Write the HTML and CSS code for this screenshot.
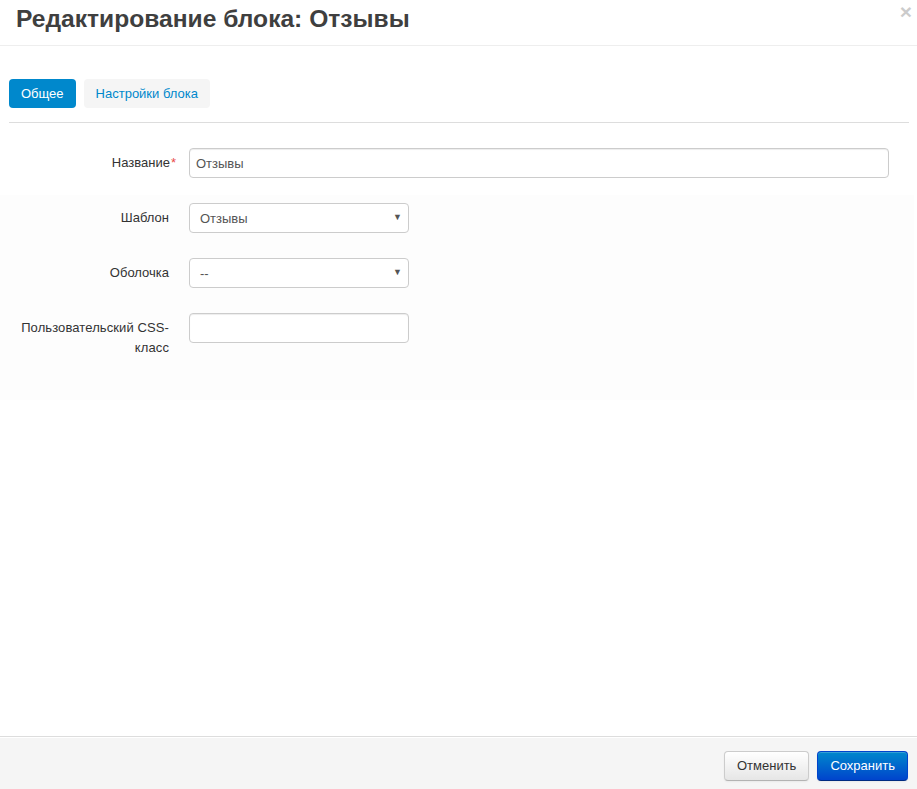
FILE: index.html
```html
<!DOCTYPE html>
<html lang="ru">
<head>
<meta charset="utf-8">
<title>Редактирование блока: Отзывы</title>
<link rel="stylesheet" href="styles.css">
</head>
<body>
<div class="modal">
  <div class="modal-header">
    <h3 class="modal-title">Редактирование блока: Отзывы</h3>
    <span class="close">×</span>
  </div>
  <div class="modal-body">
    <div class="tabs">
      <a class="tab tab-active">Общее</a>
      <a class="tab">Настройки блока</a>
    </div>
    <form class="form">
      <div class="row row-first">
        <label class="label">Название<span class="req">*</span></label>
        <div class="control"><input class="input input-wide" type="text" value="Отзывы"></div>
      </div>
      <div class="fieldset">
        <div class="row">
          <label class="label">Шаблон</label>
          <div class="control"><div class="select"><span>Отзывы</span><i class="caret">▼</i></div></div>
        </div>
        <div class="row">
          <label class="label">Оболочка</label>
          <div class="control"><div class="select"><span>--</span><i class="caret">▼</i></div></div>
        </div>
        <div class="row row-last">
          <label class="label label-wrap">Пользовательский CSS-<br>класс</label>
          <div class="control"><input class="input input-small" type="text" value=""></div>
        </div>
      </div>
    </form>
  </div>
  <div class="modal-footer">
    <button class="btn" type="button">Отменить</button>
    <button class="btn btn-primary" type="button">Сохранить</button>
  </div>
</div>
</body>
</html>
```

FILE: styles.css
```css
* { box-sizing: border-box; }
html, body { margin: 0; padding: 0; background: #fff; }
body {
  font-family: "Liberation Sans", Arial, sans-serif;
  font-size: 13px;
  line-height: 20px;
  color: #333;
}
.modal {
  height: 789px;
  display: flex;
  flex-direction: column;
  position: relative;
}
.modal-header {
  height: 46px;
  padding: 4px 16px 0;
  border-bottom: 1px solid #eee;
}
.modal-title {
  margin: 0;
  font-size: 24.6px;
  line-height: 30px;
  font-weight: bold;
  color: #3f3f3f;
}
.close {
  position: absolute;
  top: 0;
  right: 5px;
  font-size: 21px;
  line-height: 24px;
  font-weight: bold;
  color: #000;
  opacity: 0.2;
}
.modal-body {
  flex: 1;
  padding-top: 33px;
}
.tabs {
  display: flex;
  gap: 8px;
  margin: 0 8px 0 9px;
  padding-bottom: 14px;
  border-bottom: 1px solid #ddd;
}
.tab {
  display: block;
  height: 29px;
  line-height: 29px;
  padding: 0 12px;
  border-radius: 4px;
  background: #f5f5f5;
  color: #0088cc;
}
.tab-active {
  background: #0088cc;
  color: #fff;
}
.form {
  padding-top: 25px;
}
.row {
  display: flex;
  align-items: flex-start;
  margin-bottom: 25px;
}
.row-first { margin-bottom: 17px; }
.row-last { margin-bottom: 0; }
.label {
  width: 169px;
  flex: none;
  text-align: right;
  padding-top: 5px;
  color: #333;
}
.label-wrap { letter-spacing: 0.1px; }
.req {
  color: #e94b4b;
  margin-right: -7px;
  margin-left: 1px;
}
.control {
  margin-left: 20px;
}
.input {
  display: block;
  height: 30px;
  padding: 4px 6px;
  font-family: "Liberation Sans", Arial, sans-serif;
  font-size: 13px;
  line-height: 20px;
  color: #555;
  background: #fff;
  border: 1px solid #ccc;
  border-radius: 4px;
  box-shadow: inset 0 1px 1px rgba(0,0,0,0.075);
  outline: none;
}
.input-wide { width: 700px; }
.input-small { width: 220px; }
.fieldset {
  background: #fdfdfd;
  margin-right: 3px;
  padding-top: 8px;
  height: 205px;
}
.select {
  position: relative;
  width: 220px;
  height: 30px;
  padding: 5px 10px;
  border: 1px solid #ccc;
  border-radius: 4px;
  background: #fff;
  color: #555;
  line-height: 20px;
}
.caret {
  position: absolute;
  right: 6px;
  top: 3px;
  font-style: normal;
  font-size: 9px;
  color: #555;
}
.modal-footer {
  height: 53px;
  padding: 14px 9px 0 0;
  background: #f5f5f5;
  border-top: 1px solid #ddd;
  box-shadow: inset 0 1px 0 #fff;
  display: flex;
  justify-content: flex-end;
  align-items: flex-start;
  gap: 8px;
}
.btn {
  height: 30px;
  padding: 4px 12px;
  font-family: "Liberation Sans", Arial, sans-serif;
  font-size: 13px;
  line-height: 20px;
  color: #333;
  border: 1px solid #ccc;
  border-bottom-color: #b3b3b3;
  border-radius: 4px;
  background: linear-gradient(#ffffff, #e6e6e6);
  box-shadow: inset 0 1px 0 rgba(255,255,255,0.2), 0 1px 2px rgba(0,0,0,0.05);
}
.btn-primary {
  color: #fff;
  border-color: #0044cc #0044cc #002a80;
  background: linear-gradient(#0088cc, #0044cc);
}
```
